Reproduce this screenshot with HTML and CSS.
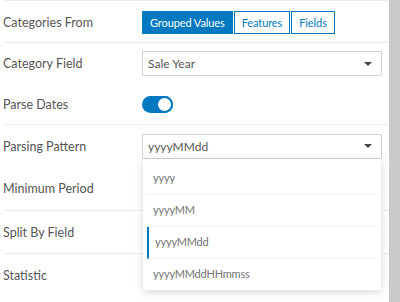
FILE: index.html
```html
<!DOCTYPE html>
<html lang="en">
<head>
  <meta charset="UTF-8" />
  <meta name="viewport" content="width=device-width, initial-scale=1.0" />
  <title>Chart Settings</title>
  <link rel="stylesheet" href="styles.css">
</head>
<body>
  <div class="frame">
    <div class="panel">

      <div class="section">
        <div class="row">
          <span class="label">Categories From</span>
          <div class="seg">
            <button class="seg-btn active">Grouped Values</button>
            <button class="seg-btn">Features</button>
            <button class="seg-btn">Fields</button>
          </div>
        </div>
      </div>

      <div class="section">
        <div class="row row-a">
          <span class="label">Category Field</span>
          <div class="select">
            <span>Sale Year</span>
            <span class="caret"></span>
          </div>
        </div>
        <div class="row row-b">
          <span class="label">Parse Dates</span>
          <span class="toggle"><span class="knob"></span></span>
        </div>
      </div>

      <div class="section">
        <div class="row row-c">
          <span class="label">Parsing Pattern</span>
          <div class="select open">
            <span>yyyyMMdd</span>
            <span class="caret"></span>
            <ul class="menu">
              <li>yyyy</li>
              <li>yyyyMM</li>
              <li class="current">yyyyMMdd</li>
              <li>yyyyMMddHHmmss</li>
            </ul>
          </div>
        </div>
        <div class="row row-d">
          <span class="label">Minimum Period</span>
        </div>
      </div>

      <div class="section">
        <div class="row">
          <span class="label">Split By Field</span>
        </div>
      </div>

      <div class="section last">
        <div class="row">
          <span class="label">Statistic</span>
        </div>
      </div>

    </div>
    <div class="scrollbar"></div>
  </div>
</body>
</html>
```

FILE: styles.css
```css
:root {
  --text: #555555;
  --muted: #727272;
  --blue: #0079c1;
  --line: #ececec;
  --border: #d4d4d4;
}

body {
  margin: 0;
  font-family: Lato, "Open Sans", sans-serif;
  font-size: 12.5px;
  color: var(--text);
  background: #fff;
}

.frame {
  display: flex;
  height: 302px;
  overflow: hidden;
}

.panel {
  flex: 1;
  padding-top: 1px;
  border-top: 1px solid var(--line);
  margin-left: 3px;
}

.scrollbar {
  width: 11px;
  background: #cacaca;
}

.section {
  border-bottom: 1px solid var(--line);
}

.section.last {
  border-bottom: none;
}

.row {
  display: flex;
  align-items: center;
  height: 40px;
}

.row-a { height: 41px; }
.row-b { height: 40px; }
.row-c { height: 42px; }
.row-d { height: 43px; }

.section:nth-child(4) .row { height: 42px; }
.section.last .row { height: 42px; }

.label {
  width: 139px;
  flex-shrink: 0;
}

.seg {
  display: flex;
  gap: 1px;
}

.seg-btn {
  font-family: inherit;
  font-size: 11px;
  letter-spacing: -0.1px;
  height: 23px;
  padding: 0 7px;
  border: 1px solid var(--blue);
  background: #fff;
  color: var(--blue);
  margin: 0;
}

.seg-btn.active {
  background: var(--blue);
  color: #fff;
}

.select {
  position: relative;
  display: flex;
  align-items: center;
  justify-content: space-between;
  box-sizing: border-box;
  width: 240px;
  height: 25px;
  padding: 0 9px 0 5px;
  border: 1px solid var(--border);
  background: #fff;
  font-size: 12px;
}

.caret {
  width: 0;
  height: 0;
  border-left: 4px solid transparent;
  border-right: 4px solid transparent;
  border-top: 4px solid #444;
}

.toggle {
  position: relative;
  display: block;
  width: 31px;
  height: 17px;
  border-radius: 9px;
  background: var(--blue);
}

.knob {
  position: absolute;
  right: 0;
  top: 0;
  width: 13px;
  height: 13px;
  border: 2px solid var(--blue);
  border-radius: 50%;
  background: #fff;
}

.menu {
  position: absolute;
  left: 0;
  top: 24px;
  width: 238px;
  margin: 0;
  padding: 4px 4px 0;
  box-sizing: border-box;
  list-style: none;
  background: #fff;
  box-shadow: 0 2px 8px rgba(0, 0, 0, 0.16);
  z-index: 2;
}

.menu li {
  height: 31px;
  line-height: 29px;
  padding-left: 6px;
  color: var(--muted);
  font-size: 11px;
  letter-spacing: -0.2px;
  border-bottom: 1px solid #efefef;
}

.menu li:last-child {
  border-bottom: none;
}

.menu li.current {
  border-left: 2px solid var(--blue);
  padding-left: 6px;
}
```
